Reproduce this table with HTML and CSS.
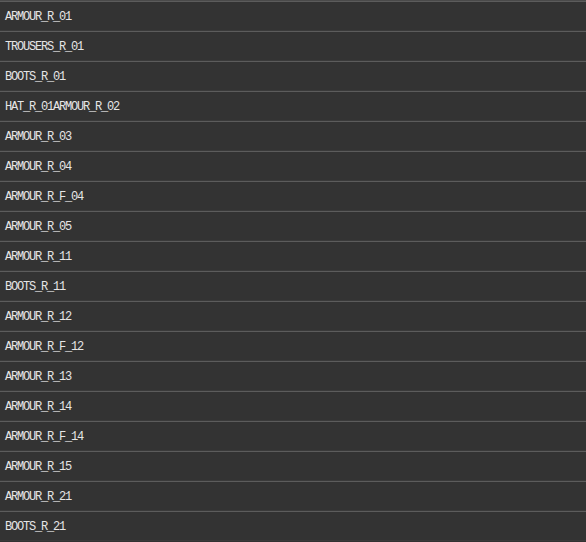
FILE: index.html
```html
<!DOCTYPE html>
<html>
<head>
<meta charset="utf-8">
<link rel="stylesheet" href="styles.css">
</head>
<body>
<ul class="list">
<li class="row">ARMOUR_R_01</li>
<li class="row">TROUSERS_R_01</li>
<li class="row">BOOTS_R_01</li>
<li class="row">HAT_R_01ARMOUR_R_02</li>
<li class="row">ARMOUR_R_03</li>
<li class="row">ARMOUR_R_04</li>
<li class="row">ARMOUR_R_F_04</li>
<li class="row">ARMOUR_R_05</li>
<li class="row">ARMOUR_R_11</li>
<li class="row">BOOTS_R_11</li>
<li class="row">ARMOUR_R_12</li>
<li class="row">ARMOUR_R_F_12</li>
<li class="row">ARMOUR_R_13</li>
<li class="row">ARMOUR_R_14</li>
<li class="row">ARMOUR_R_F_14</li>
<li class="row">ARMOUR_R_15</li>
<li class="row">ARMOUR_R_21</li>
<li class="row">BOOTS_R_21</li>
</ul>
</body>
</html>
```
FILE: styles.css
```css
html, body {
  margin: 0;
  padding: 0;
  background: #333333;
  height: 100%;
  overflow: hidden;
}
.list {
  list-style: none;
  margin: 0;
  padding: 0;
  border-top: 1px solid #4a4a4a;
}
.row {
  height: 29px;
  border-top: 1px solid #5c5c5c;
  display: flex;
  align-items: center;
  padding-left: 5px;
  color: #e6e6e6;
  font-family: "Liberation Mono", monospace;
  font-size: 12px;
  letter-spacing: -1.2px;
  box-shadow: inset 0 -1px 0 #3a3a3a;
}
```
